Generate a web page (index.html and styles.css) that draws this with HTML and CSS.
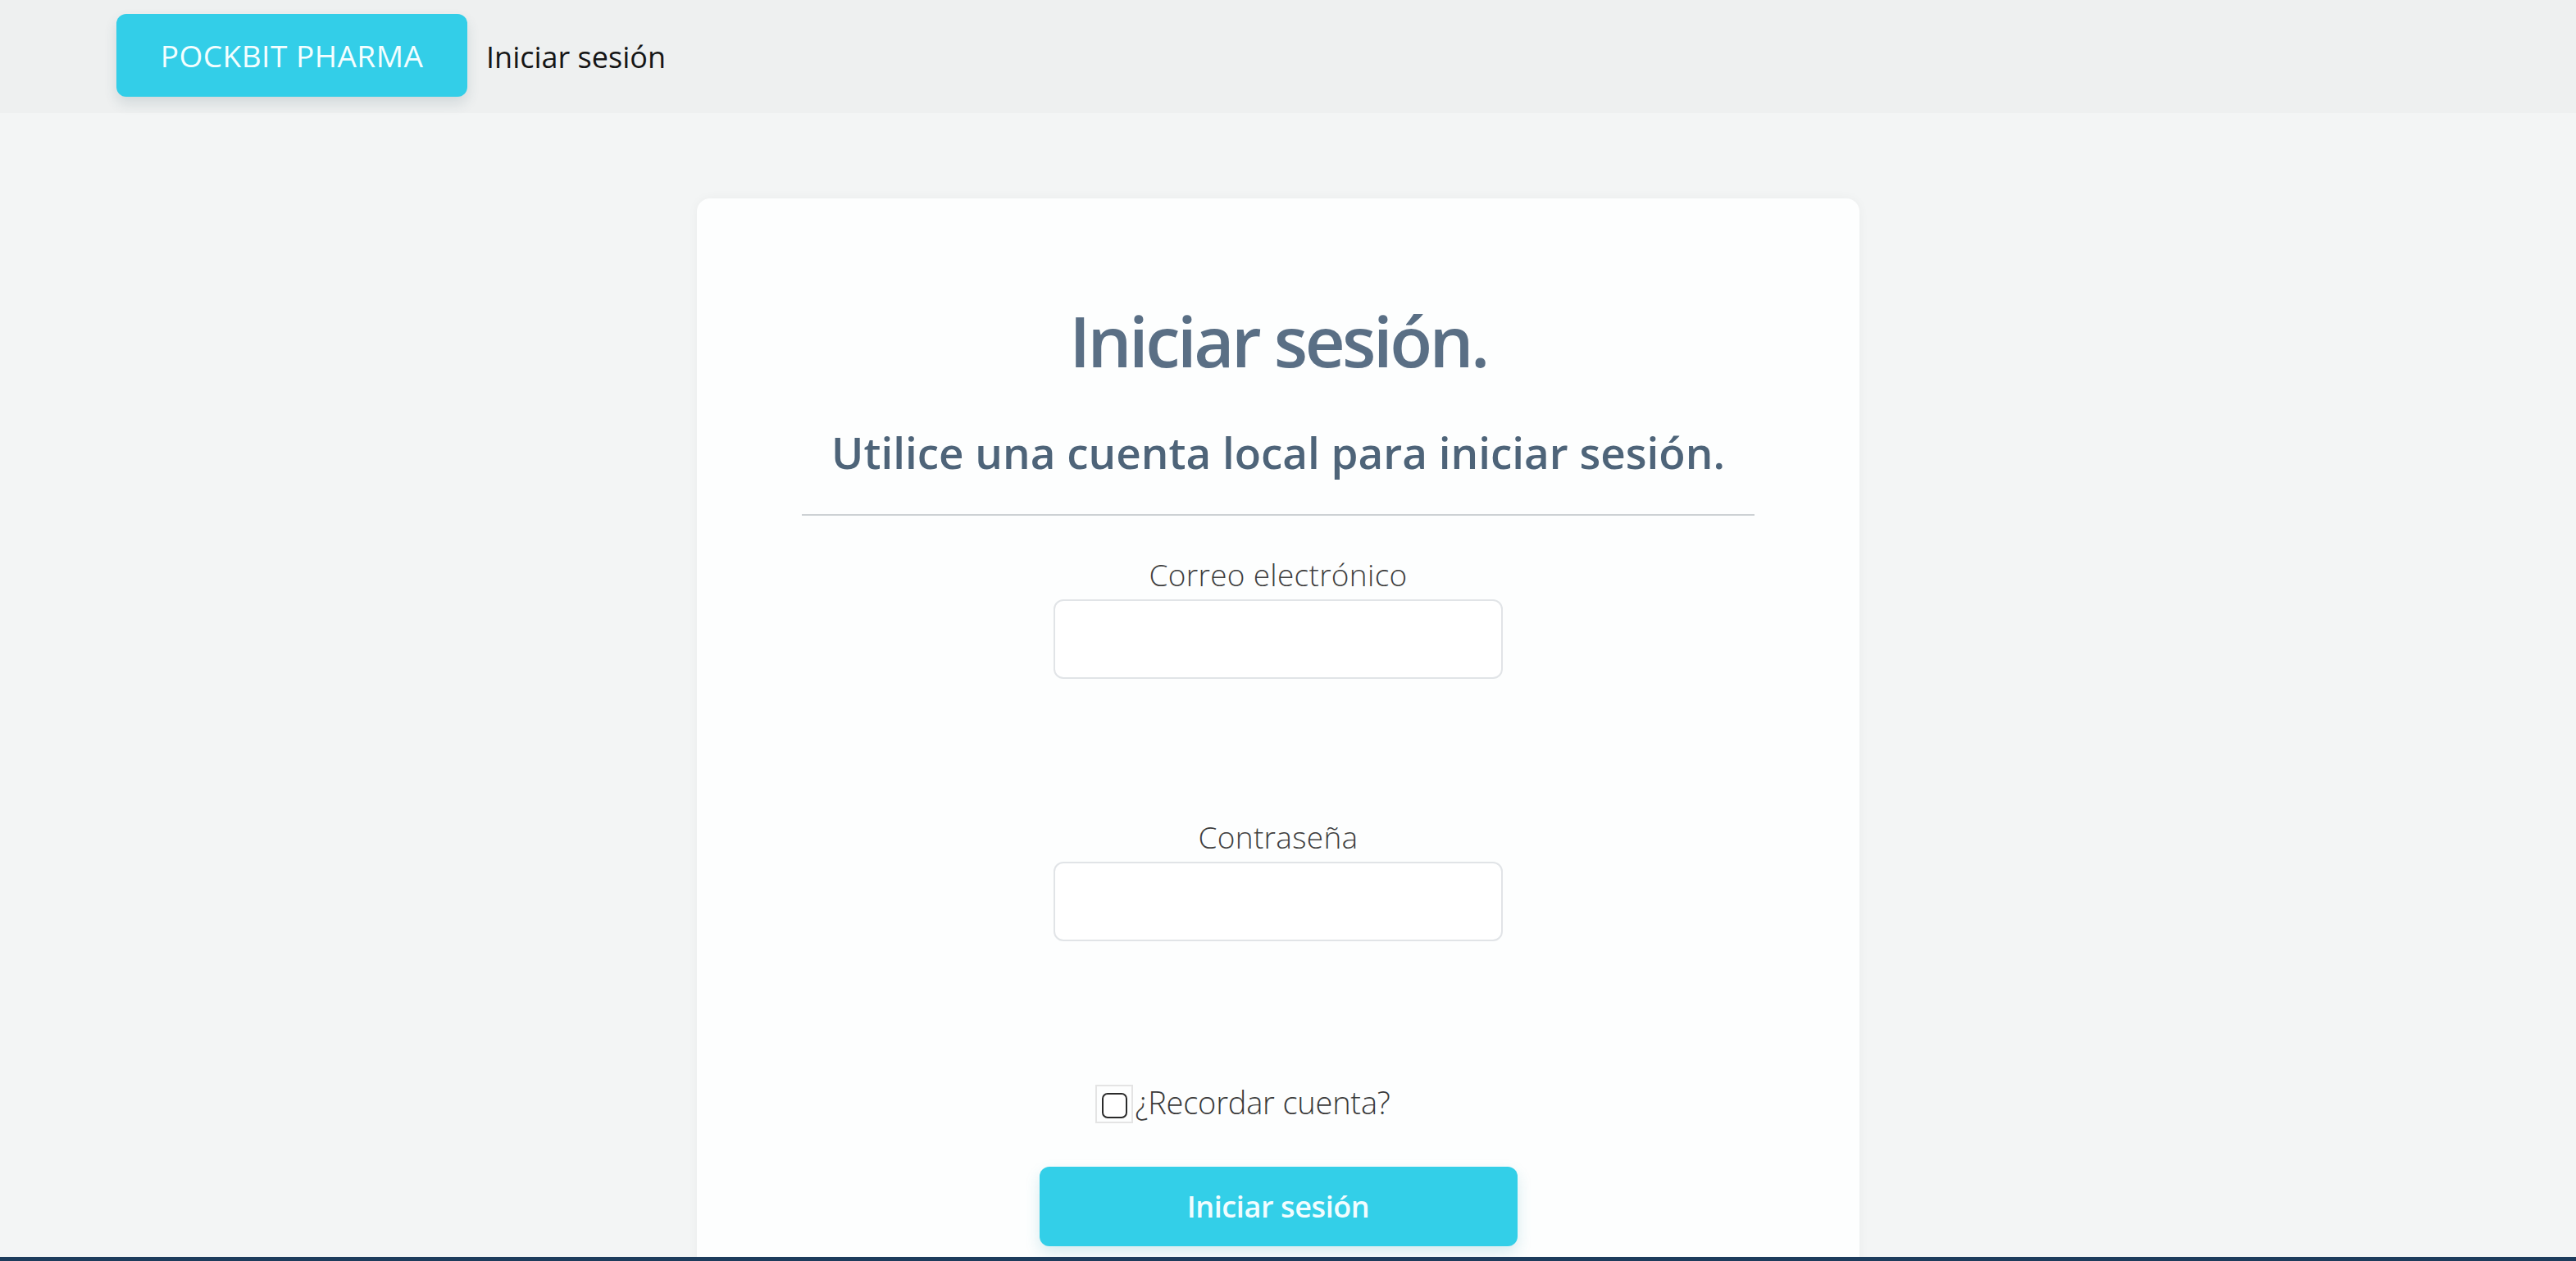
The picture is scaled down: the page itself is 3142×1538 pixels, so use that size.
FILE: index.html
```html
<!DOCTYPE html>
<html lang="es">
<head>
<meta charset="utf-8">
<title>Iniciar sesión - Pockbit Pharma</title>
<link rel="stylesheet" href="styles.css">
</head>
<body>
<header class="nav">
  <a class="brand" href="#">POCKBIT PHARMA</a>
  <a class="nav-link" href="#">Iniciar sesión</a>
</header>
<main class="main">
  <section class="card">
    <h1 class="title">Iniciar sesión.</h1>
    <h2 class="subtitle">Utilice una cuenta local para iniciar sesión.</h2>
    <hr class="divider">
    <form class="form">
      <label class="label label-email" for="email">Correo electrónico</label>
      <input class="input" id="email" type="email">
      <label class="label label-pass" for="pass">Contraseña</label>
      <input class="input" id="pass" type="password">
      <div class="remember">
        <span class="check-wrap"><input class="check" type="checkbox" id="remember"></span>
        <label class="remember-text" for="remember">¿Recordar cuenta?</label>
      </div>
      <button class="submit" type="button">Iniciar sesión</button>
    </form>
  </section>
</main>
<footer class="footer"></footer>
</body>
</html>
```
FILE: styles.css
```css
html, body {
  margin: 0;
  padding: 0;
  height: 100%;
}
body {
  display: flex;
  flex-direction: column;
  background: #f3f5f5;
  font-family: "Open Sans", "Noto Sans", sans-serif;
  color: #212529;
  overflow: hidden;
}
.nav {
  flex: 0 0 138px;
  display: flex;
  align-items: center;
  gap: 23px;
  padding-left: 142px;
  background: #eef0f0;
  box-sizing: border-box;
}
.brand {
  display: flex;
  align-items: center;
  justify-content: center;
  width: 428px;
  height: 101px;
  margin-top: -3px;
  background: #33cee8;
  border-radius: 12px;
  color: #f4feff;
  font-size: 37px;
  letter-spacing: 0.5px;
  text-decoration: none;
  box-shadow: 0 8px 16px rgba(40, 80, 90, 0.14);
}
.nav-link {
  color: #161616;
  font-size: 36px;
  letter-spacing: 0;
  text-decoration: none;
}
.main {
  flex: 1;
  display: flex;
  justify-content: center;
  padding-top: 104px;
  padding-right: 24px;
  overflow: hidden;
}
.card {
  width: 1418px;
  min-height: 1400px;
  box-sizing: border-box;
  padding: 123px 128px 80px;
  background: #fdfefe;
  border-radius: 16px;
  box-shadow: 0 0 14px rgba(0, 0, 0, 0.04);
  text-align: center;
}
.title {
  margin: 0;
  font-size: 85px;
  line-height: 100px;
  font-weight: 600;
  color: #5a6f85;
  letter-spacing: -3.5px;
}
.subtitle {
  margin: 55px 0 0;
  font-size: 53px;
  line-height: 64px;
  font-weight: 600;
  color: #4e6479;
  letter-spacing: 0;
}
.divider {
  margin: 43px 0 0;
  border: 0;
  height: 2px;
  background: #cdd1d4;
}
.form {
  display: flex;
  flex-direction: column;
  align-items: center;
}
.label {
  display: block;
  font-size: 37px;
  line-height: 44px;
  color: #3f3f3f;
  letter-spacing: 0.3px;
  font-weight: 300;
}
.label-email {
  margin-top: 50px;
}
.label-pass {
  margin-top: 171px;
}
.input {
  margin-top: 8px;
  width: 548px;
  height: 97px;
  box-sizing: border-box;
  border: 2px solid #e1e4e7;
  border-radius: 12px;
  background: #ffffff;
}
.remember {
  margin-top: 169px;
  display: flex;
  align-items: center;
  gap: 2px;
  margin-left: -86px;
}
.check-wrap {
  display: flex;
  align-items: center;
  justify-content: center;
  width: 46px;
  height: 47px;
  box-sizing: border-box;
  border: 2px solid #e4e4e4;
  margin-top: 6px;
}
.check {
  appearance: none;
  -webkit-appearance: none;
  margin: 4px 0 0;
  width: 31px;
  height: 31px;
  box-sizing: border-box;
  border: 2px solid #2a2a2a;
  border-radius: 7px;
  background: #ffffff;
}
.remember-text {
  font-size: 38px;
  line-height: 48px;
  color: #3a3a3a;
  font-weight: 300;
  letter-spacing: -0.2px;
}
.submit {
  margin-top: 53px;
  width: 583px;
  height: 97px;
  border: 0;
  border-radius: 12px;
  background: #33cfe8;
  color: #f2fdff;
  font-family: "Open Sans", "Noto Sans", sans-serif;
  font-size: 36px;
  font-weight: 600;
  letter-spacing: -0.4px;
  box-shadow: 0 8px 18px rgba(40, 150, 170, 0.18);
}
.footer {
  flex: 0 0 5px;
  background: #1d3c5c;
}
```
